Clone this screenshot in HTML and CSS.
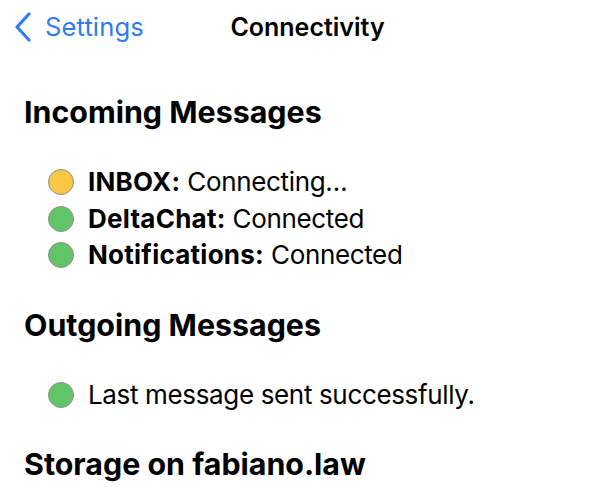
FILE: index.html
```html
<!DOCTYPE html>
<html>
<head>
    <title>Connectivity</title>
    <link rel="stylesheet" href="styles.css">
</head>
<body>
    <nav class="nav-bar">
        <a class="back-link" href="#">
            <svg width="18" height="30" viewBox="0 0 18 30" fill="none" stroke="currentColor" stroke-width="3.2" stroke-linecap="round" stroke-linejoin="round">
                <polyline points="15 2 3 15 15 28"></polyline>
            </svg>
            Settings
        </a>
        <div class="nav-title">Connectivity</div>
        <div></div>
    </nav>

    <main class="content">
        <h2 class="section-title">Incoming Messages</h2>
        <ul class="status-list">
            <li><span class="dot dot-connecting"></span><b>INBOX:</b>&nbsp;Connecting…</li>
            <li><span class="dot dot-ok"></span><b>DeltaChat:</b>&nbsp;Connected</li>
            <li><span class="dot dot-ok"></span><b>Notifications:</b>&nbsp;Connected</li>
        </ul>

        <h2 class="section-title">Outgoing Messages</h2>
        <ul class="status-list">
            <li><span class="dot dot-ok"></span>Last message sent successfully.</li>
        </ul>

        <h2 class="section-title">Storage on fabiano.law</h2>
    </main>
</body>
</html>
```

FILE: styles.css
```css
:root {
    --blue: #2f7bf5;
    --text: #000;
    --yellow: #f6c845;
    --green: #61c567;
    --dot-border: #8d8d8d;
}

* {
    margin: 0;
    padding: 0;
    box-sizing: border-box;
}

body {
    font-family: 'Inter', 'Noto Sans', sans-serif;
    background: #fff;
    color: var(--text);
}

.nav-bar {
    display: grid;
    grid-template-columns: 1fr auto 1fr;
    align-items: center;
    padding: 12px 14px 0;
    height: 42px;
}

.back-link {
    display: flex;
    align-items: center;
    gap: 13px;
    color: var(--blue);
    text-decoration: none;
    font-size: 25.6px;
    line-height: 30px;
    letter-spacing: 0.1px;
}

.nav-title {
    font-size: 25px;
    line-height: 30px;
    font-weight: 600;
}

.content {
    padding: 52px 24px 0;
}

.section-title {
    font-size: 30.4px;
    line-height: 36px;
    font-weight: 700;
    margin-bottom: 34px;
}

.status-list {
    list-style: none;
    padding-left: 24px;
    margin-bottom: 33px;
}

.status-list li {
    display: flex;
    align-items: center;
    font-size: 26px;
    line-height: 36.5px;
    letter-spacing: -0.35px;
}

.status-list b {
    font-weight: 700;
    letter-spacing: 0.25px;
}

.dot {
    width: 26px;
    height: 26px;
    border-radius: 50%;
    border: 1.5px solid var(--dot-border);
    margin-right: 14px;
    flex-shrink: 0;
}

.dot-connecting {
    background: var(--yellow);
}

.dot-ok {
    background: var(--green);
}
```
